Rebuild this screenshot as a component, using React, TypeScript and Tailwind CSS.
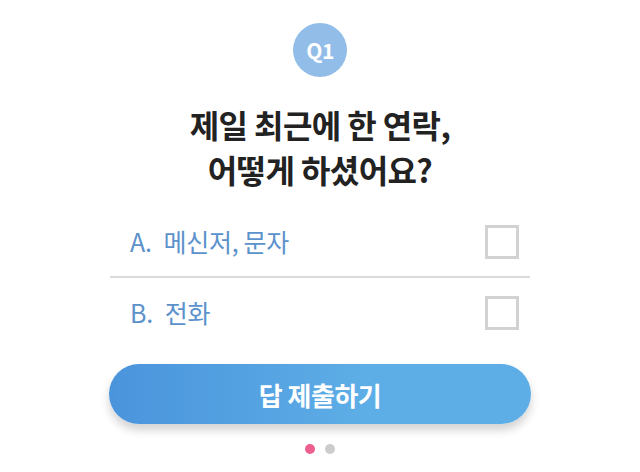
import { useState } from 'react'

const options = [
  { key: 'A', label: '메신저, 문자' },
  { key: 'B', label: '전화' },
]

const App = () => {
  const [checked, setChecked] = useState<string[]>([])

  const toggle = (key: string) => {
    setChecked((prev) => (prev.includes(key) ? prev.filter((k) => k !== key) : [...prev, key]))
  }

  return (
    <div
      className="w-[640px] h-[472px] bg-white flex flex-col items-center pt-[23px]"
      style={{ fontFamily: '"Noto Sans CJK KR", "Noto Sans", sans-serif' }}
    >
      {/* Question badge */}
      <div className="w-[54px] h-[54px] rounded-full bg-[#92bde8] flex items-center justify-center">
        <span className="text-white text-[21px] font-bold leading-none tracking-tight">Q1</span>
      </div>

      {/* Title */}
      <h1 className="mt-[25px] text-[32px] leading-[45px] font-bold text-[#222] text-center tracking-[-0.6px]">
        제일 최근에 한 연락,
        <br />
        어떻게 하셨어요?
      </h1>

      {/* Options */}
      <div className="mt-[16px] w-[420px] flex flex-col">
        {options.map((opt, i) => (
          <div
            key={opt.key}
            onClick={() => toggle(opt.key)}
            className={`flex items-center justify-between h-[70px] pl-[20px] pr-[11px] cursor-pointer ${
              i === 0 ? 'border-b-2 border-[#dadada]' : ''
            }`}
          >
            <span className="text-[25px] text-[#5b92cb] tracking-[-0.3px] flex items-center">
              <span>{opt.key}.</span>
              <span className="ml-[12px]">{opt.label}</span>
            </span>
            <div
              className={`w-[34px] h-[34px] border-[3px] border-[#d2d2d2] ${
                checked.includes(opt.key) ? 'bg-[#5b92cb]' : 'bg-white'
              }`}
            />
          </div>
        ))}
      </div>

      {/* Submit */}
      <button className="mt-[16px] w-[422px] h-[60px] rounded-full bg-gradient-to-r from-[#4a94dc] via-[#5dade6] via-60% to-[#5dade6] shadow-[0_6px_10px_rgba(0,0,0,0.18)] text-white text-[26px] font-bold tracking-[-0.5px]">
        답 제출하기
      </button>

      {/* Pager dots */}
      <div className="mt-[20px] flex gap-[10px]">
        <span className="w-[10px] h-[10px] rounded-full bg-[#ec5f8e]" />
        <span className="w-[10px] h-[10px] rounded-full bg-[#cccccc]" />
      </div>
    </div>
  )
}

export default App
